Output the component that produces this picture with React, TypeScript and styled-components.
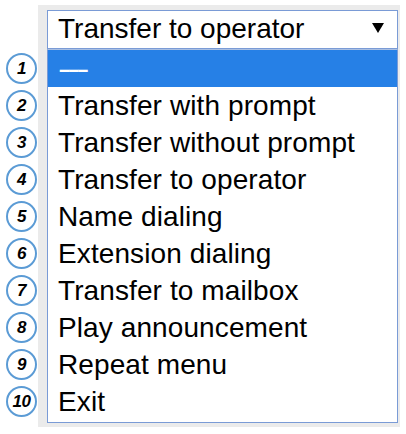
import { createGlobalStyle } from "styled-components";
import styled from "styled-components";

const GlobalStyle = createGlobalStyle`
  body {
    margin: 0;
    background: #ffffff;
    font-family: "Liberation Sans", Arial, sans-serif;
  }
`;

const Page = styled.div`
  display: flex;
  align-items: flex-start;
  padding-top: 5px;
`;

const BadgeColumn = styled.div`
  display: flex;
  flex: none;
  flex-direction: column;
  width: 38px;
  box-sizing: border-box;
  padding: 45px 0 0 6px;
`;

const BadgeRow = styled.div`
  display: flex;
  align-items: center;
  height: 37px;
`;

const Badge = styled.div`
  display: flex;
  flex: none;
  align-items: center;
  justify-content: center;
  width: 31px;
  height: 31px;
  box-sizing: border-box;
  border: 2px solid #5b9bd5;
  border-radius: 50%;
  background: #ffffff;
  color: #000000;
  font-size: 17px;
  font-weight: bold;
  font-style: italic;
  letter-spacing: -0.5px;
`;

const Frame = styled.div`
  flex: none;
  width: 362px;
  box-sizing: border-box;
  padding: 5px 2px 4px 9px;
  background: #ebebeb;
`;

const SelectBox = styled.div`
  display: flex;
  align-items: center;
  justify-content: space-between;
  height: 39px;
  box-sizing: border-box;
  padding: 0 13px 1px 10px;
  border: 1px solid #7a9bd6;
  background: #ffffff;
  color: #000000;
  font-size: 28px;
`;

const Arrow = styled.svg`
  width: 12px;
  height: 10px;
  margin-bottom: 2px;
`;

const List = styled.div`
  border: 1px solid #7a9bd6;
  border-top-color: #a9bfe3;
  padding-bottom: 2px;
  background: #ffffff;
`;

const Option = styled.div<{ $selected?: boolean }>`
  height: 37px;
  line-height: 37px;
  padding-left: 10px;
  font-size: 28px;
  letter-spacing: 0.1px;
  white-space: nowrap;
  color: ${({ $selected }) => ($selected ? "#ffffff" : "#000000")};
  background: ${({ $selected }) => ($selected ? "#2680e6" : "transparent")};
`;

const Dash = styled.span`
  display: inline-block;
  letter-spacing: -2.6px;
  transform: scaleX(1.38);
  transform-origin: left center;
`;

const options = [
  "---",
  "Transfer with prompt",
  "Transfer without prompt",
  "Transfer to operator",
  "Name dialing",
  "Extension dialing",
  "Transfer to mailbox",
  "Play announcement",
  "Repeat menu",
  "Exit",
];

const App = () => {
  return (
    <>
      <GlobalStyle />
      <Page>
        <BadgeColumn>
          {options.map((_, i) => (
            <BadgeRow key={i}>
              <Badge>{i + 1}</Badge>
            </BadgeRow>
          ))}
        </BadgeColumn>
        <Frame>
          <SelectBox>
            <span>Transfer to operator</span>
            <Arrow viewBox="0 0 12 10">
              <polygon points="0,0 12,0 6,10" fill="#000000" />
            </Arrow>
          </SelectBox>
          <List>
            {options.map((label, i) => (
              <Option key={label} $selected={i === 0}>
                {i === 0 ? <Dash>{label}</Dash> : label}
              </Option>
            ))}
          </List>
        </Frame>
      </Page>
    </>
  );
};

export default App;
